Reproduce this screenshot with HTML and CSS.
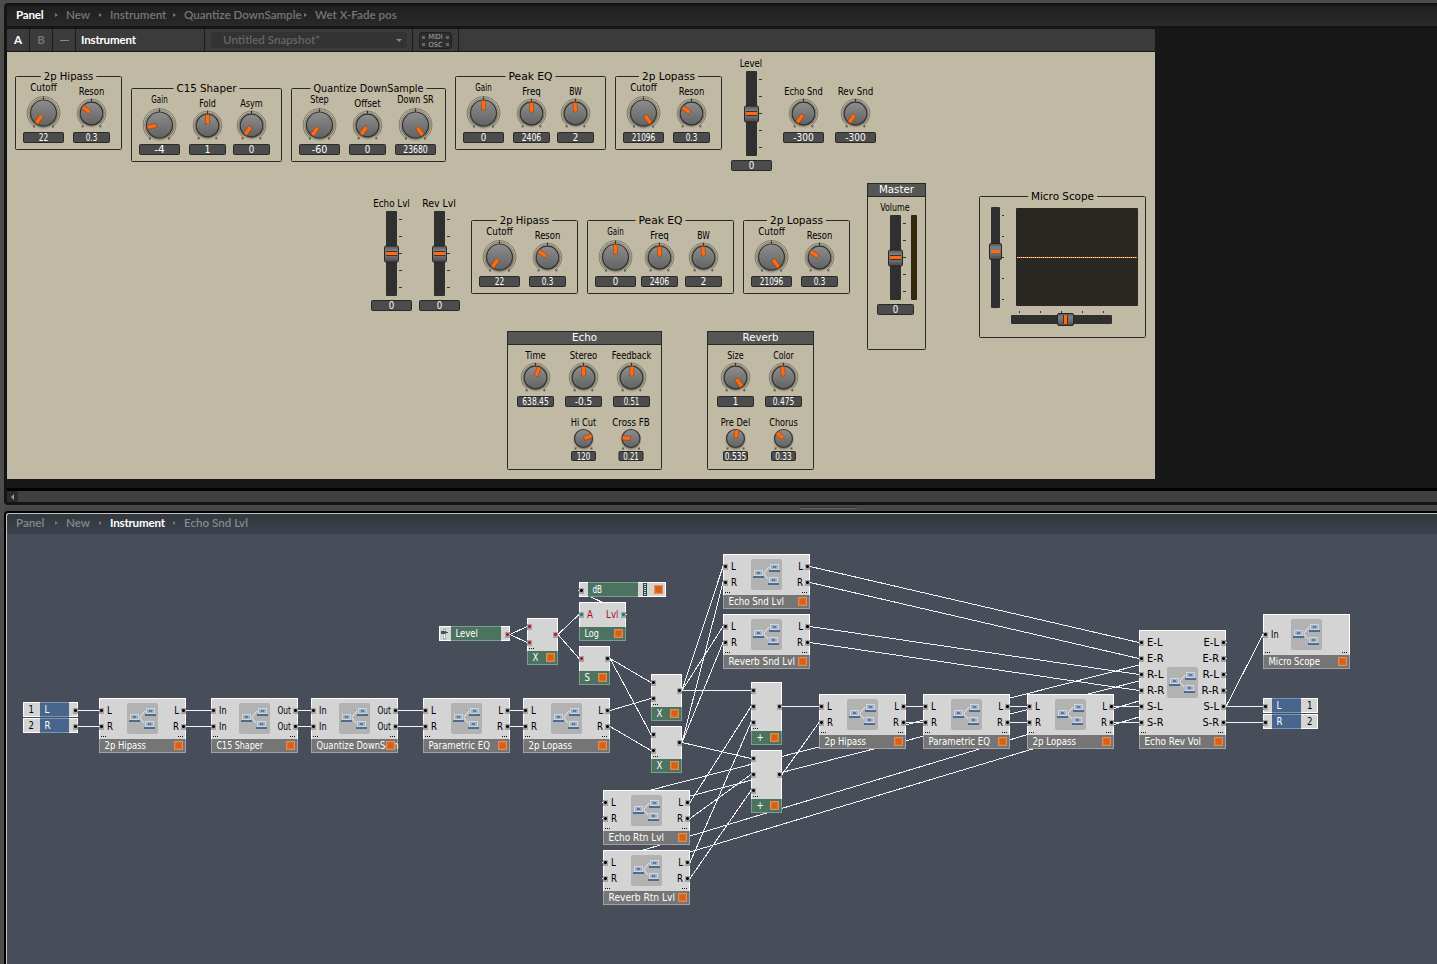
FILE: index.html
```html
<!DOCTYPE html>
<html lang="en">
<head>
<meta charset="utf-8">
<title>Instrument</title>
<link rel="stylesheet" href="styles.css">
</head>
<body>
<section class="window window-panel">
  <nav class="crumbs">
    <span class="crumb active">Panel</span><span class="crumb">New</span><span class="crumb">Instrument</span><span class="crumb">Quantize DownSample</span><span class="crumb">Wet X-Fade pos</span>
  </nav>
  <div class="panel-area">
    <div class="instrument">
      <header class="toolbar">
        <div class="cell slot on">A</div>
        <div class="cell slot">B</div>
        <div class="cell slot"><i class="dash"></i></div>
        <div class="cell name">Instrument</div>
        <div class="cell snap"><div class="snap-field"><span>Untitled Snapshot*</span><i class="caret"></i></div></div>
        <div class="cell midi"><svg id="midi" width="33" height="17"></svg></div>
      </header>
      <svg id="panel" width="1148" height="427" viewBox="7 52 1148 427"></svg>
    </div>
  </div>
  <div class="scrollbar"><div class="scroll-arrow"></div></div>
</section>
<div class="splitter"><i></i></div>
<section class="window window-structure">
  <nav class="crumbs">
    <span class="crumb">Panel</span><span class="crumb">New</span><span class="crumb active">Instrument</span><span class="crumb">Echo Snd Lvl</span>
  </nav>
  <svg id="structure" width="1430" height="430" viewBox="7 534 1430 430"></svg>
</section>
<script src="app.js"></script>
</body>
</html>
```
FILE: styles.css
```css
* { box-sizing: border-box; }
body { margin: 0; width: 1437px; height: 964px; overflow: hidden; background: #4d4d4d; padding: 3px 0 0 4px; display: flex; flex-direction: column; font-family: Lato, "Noto Sans", sans-serif; }
.window { border: 3px solid #141414; border-right: 0; flex: none; }
.window-panel { height: 502px; border-radius: 4px 0 0 4px; background: #181818; }
.crumbs { display: grid; grid-template-columns: 50px 44px 74px 131px 110px; align-items: center; padding: 0 0 2px 9px; font-size: 11.6px; font-weight: 600; letter-spacing: 0; color: #767676; white-space: nowrap; }
.crumb { display: flex; align-items: center; justify-content: space-between; padding-right: 8px; line-height: 18px; }
.crumb:not(:last-child)::after { content: ""; border: 2.5px solid transparent; border-left: 3px solid #777; border-right: 0; }
.crumb.active { color: #fff; font-weight: 700; letter-spacing: -0.2px; }
.window-panel .crumbs { height: 20px; background: linear-gradient(#202020, #292929); }
.panel-area { border-top: 3px solid #141414; height: 462px; background: #181818; }
.instrument { width: 1148px; }
.toolbar { height: 23px; display: flex; background: #3b3b3b; border-bottom: 1px solid #181818; font-size: 11.6px; letter-spacing: -0.2px; font-weight: 700; line-height: 20px; color: #fff; }
.cell { border-right: 1px solid #1c1c1c; display: flex; align-items: center; }
.slot { width: 23px; justify-content: center; color: #757575; }
.slot.on { color: #fff; }
.dash { width: 9px; height: 1px; background: #8a8a8a; }
.name { width: 129px; padding-left: 5px; }
.snap { width: 208px; padding-left: 6px; }
.snap-field { width: 196px; height: 16px; display: flex; align-items: center; justify-content: space-between; background: #333; border-radius: 3px; padding: 0 5px 0 12px; color: #666; font-weight: 600; letter-spacing: 0; }
.caret { border: 3px solid transparent; border-top-color: #888; border-bottom: 0; }
.midi { width: 46px; justify-content: center; }
svg { display: block; }
.scrollbar { border-top: 3px solid #000; height: 14px; background: #404040; }
.scroll-arrow { width: 11px; height: 11px; background: #2b2b2b; display: flex; align-items: center; justify-content: center; }
.scroll-arrow::after { content: ""; border: 3px solid transparent; border-right-color: #999; border-left: 0; }
.splitter { height: 6px; display: flex; justify-content: center; align-items: center; background: #484848; flex: none; padding: 0 0 0 216px; }
.splitter i { width: 57px; height: 2px; background: #303030; border-bottom: 1px solid #666; }
.window-structure { height: 453px; border: 0; border-left: 2px solid #000; border-top: 2px solid #000; border-radius: 4px 0 0 0; background: #474e5a; }
.window-structure .crumbs { height: 21px; background: linear-gradient(#32383f, #3b424c); border-top: 1px solid #c4c4c4; border-left: 1px solid #c4c4c4; color: #858a92; border-radius: 3px 0 0 0; }
.window-structure .crumb.active { color: #fff; }
#structure { margin-left: 1px; box-shadow: -1px 0 #c4c4c4; }
#panel { background: #c0b9a3; }

.label { font-family: "DejaVu Sans Condensed", "DejaVu Sans", sans-serif; font-size: 9.6px; fill: #000; }
.title { font-family: "DejaVu Sans", sans-serif; font-size: 9.6px; fill: #000; }
.light { fill: #fff; }
.red { fill: #a8121c; }
.tiny { font-family: "DejaVu Sans", sans-serif; font-size: 7px; fill: #aaa; letter-spacing: 0; font-weight: 400; }
.frame { fill: none; stroke: #292929; }
.header { fill: #565654; stroke: #292929; }
.readout { fill: #4c4c4c; stroke: #292929; }
.track { fill: #303030; }
.tick { stroke: #333; }
.ring { fill: none; stroke: #7e796c; }
.needle { fill: #ff6a13; stroke: #80400f; stroke-width: .5; }
.wire { stroke: #f4f4f4; shape-rendering: crispEdges; }
.node { fill: #d4d4d4; shape-rendering: crispEdges; }
.edge { fill: none; shape-rendering: crispEdges; }
```
FILE: app.js
```javascript
const NARROW = { t: 4, f: 4, r: 4, i: 2, l: 2, '.': 2, I: 3, ' ': 4, '1': 4 };
const WIDE = { m: 8, w: 7, W: 8, M: 7, R: 6, v: 6, T: 6, H: 6, Q: 6, '-': 6 };
const textWidth = s => [...s].reduce((n, c) => n + (NARROW[c] || WIDE[c] || 5), 0) - 0.5;

function text(x, y, s, opts = {}) {
  const { cls = 'label', anchor = 'start', w = textWidth(s) } = opts;
  const fit = s.length > 1 ? ` textLength="${w}" lengthAdjust="spacingAndGlyphs"` : '';
  return `<text class="${cls}" x="${x}" y="${y}" text-anchor="${anchor}"${fit}>${s}</text>`;
}
const rect = (x, y, w, h, attrs) => `<rect x="${x}" y="${y}" width="${w}" height="${h}" ${attrs}/>`;
const line = (x1, y1, x2, y2, cls) => `<line x1="${x1}" y1="${y1}" x2="${x2}" y2="${y2}" class="${cls}"/>`;

/* ---------- instrument panel ---------- */
const SIZES = {
  L: { r: 13, cy: -19, label: -41, w: 41, h: 11, rings: [14.7, 16.4], n0: 3, n1: 12.5 },
  M: { r: 11.3, cy: -18.5, label: -37, w: 37, h: 11, rings: [12.8, 14.3], n0: 1.5, n1: 11 },
  S: { r: 9, cy: -12.5, label: -25, w: 25, h: 10, rings: [], n0: 0.5, n1: 8.8 }
};
function readout(cx, y, w, h, value) {
  return rect(cx - w / 2 + 0.5, y + 0.5, w - 1, h - 1, 'rx="1" class="readout"') +
    text(cx, y + (h > 10 ? 9 : 8.5), value, { cls: 'label light', anchor: 'middle' });
}
function arc(cx, cy, r) {
  const a = 0.66, dx = r * Math.sin(a), dy = r * Math.cos(a);
  return `<path class="ring" d="M${cx - dx} ${cy + dy}A${r} ${r} 0 1 1 ${cx + dx} ${cy + dy}"/>`;
}
function knob(size, cx, base, angle, label, value, boxWidth) {
  const k = SIZES[size], cy = base + k.cy, d = size === 'L' ? 9.5 : size === 'M' ? 8.8 : 8;
  const dy = size === 'S' ? 9 : d + 3;
  return k.rings.map(r => arc(cx, cy, r)).join('') +
    (size === 'S' ? '' : line(cx, cy - k.r - 3.5, cx, cy - k.r, 'tick')) +
    rect(cx - d - 1, cy + dy, 2, 2, 'fill="#5c594f"') + rect(cx + d - 1, cy + dy, 2, 2, 'fill="#5c594f"') +
    `<circle cx="${cx}" cy="${cy + 1.5}" r="${k.r}" fill="#5d594e" filter="url(#soft)"/>` +
    `<circle cx="${cx}" cy="${cy}" r="${k.r}" fill="url(#metal)" stroke="#333" stroke-width="1.2"/>` +
    `<g transform="rotate(${angle} ${cx} ${cy})">` + rect(cx - 2, cy - k.n1, 4, k.n1 - k.n0, 'class="needle"') + '</g>' +
    text(cx, base + k.label, label, { anchor: 'middle' }) +
    readout(cx, base, boxWidth || k.w, k.h, value);
}
function frame(x, y, w, h, title, tw) {
  const m = x + w / 2;
  return rect(x + 0.5, y + 0.5, w - 1, h - 1, 'rx="1" class="frame"') +
    rect(m - tw / 2 - 3, y, tw + 6, 1, 'fill="#c0b9a3"') +
    text(m, y + 3.5, title, { cls: 'title', anchor: 'middle', w: tw });
}
function box(x, y, w, h, title, tw) {
  return rect(x + 0.5, y + 0.5, w - 1, h - 1, 'rx="1" class="frame"') +
    rect(x + 0.5, y + 0.5, w - 1, 13, 'class="header"') +
    text(x + w / 2, y + 10, title, { cls: 'title light', anchor: 'middle', w: tw });
}
function fader(x, y) {
  let s = rect(x - 5.5, y, 11, 85, 'rx="1" class="track"');
  for (let i = 0; i < 5; i++) s += line(x + 7.5, y + 8.5 + 17 * i, x + 10.5, y + 8.5 + 17 * i, 'tick');
  return s + rect(x - 7, y + 35, 14, 16, 'rx="1.5" fill="url(#cap)" stroke="#262626"') + rect(x - 5.5, y + 40, 11, 5, 'fill="#41332a"') +
    rect(x - 5.5, y + 41, 11, 3, 'fill="#ff6a13"');
}
function scope() {
  let s = frame(979, 196, 167, 142, 'Micro Scope', 63);
  s += rect(991, 207, 9, 101, 'rx="1" class="track"') + rect(1011, 315, 101, 9, 'rx="1" class="track"');
  for (let i = 0; i < 5; i++) {
    s += line(1002, 215.5 + 21 * i, 1004, 215.5 + 21 * i, 'tick') + line(1019.5 + 21 * i, 311, 1019.5 + 21 * i, 313, 'tick');
  }
  s += rect(989.5, 243.5, 12, 16, 'rx="1.5" fill="url(#cap)" stroke="#262626"') + rect(991, 250, 9, 3, 'fill="#ff6a13"');
  s += rect(1057.5, 313.5, 16, 12, 'rx="1.5" fill="url(#cap)" stroke="#262626"') + rect(1063, 315, 5, 9, 'fill="#41332a"') + rect(1064, 315, 3, 9, 'fill="#ff6a13"');
  s += rect(1016, 208, 122, 98, 'rx="1" fill="#282722"') + rect(1017, 257, 120, 1, 'fill="#ff6a13"');
  for (let x = 1017; x < 1137; x += 2) s += rect(x, 257, 1, 1, 'fill="#eee8d8"');
  return s;
}
document.getElementById('panel').innerHTML = `<defs>
  <linearGradient id="metal" x1="0" y1="0" x2="0" y2="1"><stop offset="0" stop-color="#8e8e8e"/><stop offset="1" stop-color="#626262"/></linearGradient>
  <linearGradient id="cap" x1="0" y1="0" x2="0" y2="1"><stop offset="0" stop-color="#555"/><stop offset=".25" stop-color="#7e7e7e"/><stop offset=".7" stop-color="#6b6b6b"/><stop offset="1" stop-color="#444"/></linearGradient>
  <filter id="soft" x="-20%" y="-20%" width="140%" height="140%"><feGaussianBlur stdDeviation="1"/></filter></defs>` + [
  frame(15, 76, 107, 74, '2p Hipass', 49.5),
  knob('L', 43.5, 132, 215, 'Cutoff', '22'), knob('M', 91.5, 132, -53, 'Reson', '0.3'),
  frame(131, 88, 151, 74, 'C15 Shaper', 60),
  knob('L', 159.5, 144, -100, 'Gain', '-4'), knob('M', 207.5, 144, 0, 'Fold', '1'), knob('M', 251.5, 144, 215, 'Asym', '0'),
  frame(291, 88, 155, 74, 'Quantize DownSample', 110),
  knob('L', 319.5, 144, 215, 'Step', '-60'), knob('M', 367.5, 144, 215, 'Offset', '0'), knob('L', 415.5, 144, 145, 'Down SR', '23680'),
  frame(455, 76, 151, 74, 'Peak EQ', 44),
  knob('L', 483.5, 132, 0, 'Gain', '0'), knob('M', 531.5, 132, 0, 'Freq', '2406'), knob('M', 575.5, 132, -3, 'BW', '2'),
  frame(615, 76, 107, 74, '2p Lopass', 53),
  knob('L', 643.5, 132, 145, 'Cutoff', '21096'), knob('M', 691.5, 132, -56, 'Reson', '0.3'),
  text(751, 67, 'Level', { anchor: 'middle' }), fader(751.5, 71), readout(751.5, 160, 41, 11, '0'),
  knob('M', 803.5, 132, 215, 'Echo Snd', '-300', 41), knob('M', 855.5, 132, 215, 'Rev Snd', '-300', 41),
  text(391.5, 207, 'Echo Lvl', { anchor: 'middle' }), fader(391.5, 211), readout(391.5, 300, 41, 11, '0'),
  text(439, 207, 'Rev Lvl', { anchor: 'middle' }), fader(439.5, 211), readout(439.5, 300, 41, 11, '0'),
  frame(471, 220, 107, 74, '2p Hipass', 49.5),
  knob('L', 499.5, 276, 215, 'Cutoff', '22'), knob('M', 547.5, 276, -53, 'Reson', '0.3'),
  frame(587, 220, 147, 74, 'Peak EQ', 44),
  knob('L', 615.5, 276, 0, 'Gain', '0'), knob('M', 659.5, 276, 0, 'Freq', '2406'), knob('M', 703.5, 276, -3, 'BW', '2'),
  frame(743, 220, 107, 74, '2p Lopass', 53),
  knob('L', 771.5, 276, 145, 'Cutoff', '21096'), knob('M', 819.5, 276, -56, 'Reson', '0.3'),
  box(867, 183, 59, 167, 'Master', 35),
  text(895, 211, 'Volume', { anchor: 'middle' }), fader(895.5, 215),
  rect(911, 215, 6, 85, 'rx="1" fill="#292621"'), rect(912, 217, 4, 81, 'fill="#342a08"'), readout(895.5, 304, 37, 11, '0'),
  scope(),
  box(507, 331, 155, 139, 'Echo', 25),
  knob('M', 535.5, 396, 20, 'Time', '638.45'), knob('M', 583.5, 396, 0, 'Stereo', '-0.5'), knob('M', 631.5, 396, 3, 'Feedback', '0.51'),
  knob('S', 583.5, 451, 73, 'Hi Cut', '120'), knob('S', 631, 451, -85, 'Cross FB', '0.21'),
  box(707, 331, 107, 139, 'Reverb', 36),
  knob('M', 735.5, 396, 145, 'Size', '1'), knob('M', 783.5, 396, -5, 'Color', '0.475'),
  knob('S', 735.5, 451, 10, 'Pre Del', '0.535'), knob('S', 783.5, 451, -48, 'Chorus', '0.33')
].join('');

document.getElementById('midi').innerHTML = rect(0.5, 0.5, 32, 16, 'rx="2.5" fill="#2d2d2d" stroke="#222"') +
  text(16.5, 7, 'MIDI', { cls: 'tiny', anchor: 'middle', w: 14 }) + text(16.5, 14.5, 'OSC', { cls: 'tiny', anchor: 'middle', w: 14 }) +
  [[3, 4], [27, 4], [3, 11], [27, 11]].map(([x, y]) => rect(x, y, 3, 3, 'fill="#666"')).join('');

/* ---------- structure ---------- */
const GRAY = ['#757575', '#a2a2a2'], GREEN = ['#4c7360', '#79a08f'];
function port(x, y, color = '#000') {
  return rect(x - 2, y - 2, 5, 6, 'fill="#a3a3a3" shape-rendering="crispEdges"') +
    rect(x - 1, y, 3, 1, `fill="${color}"`) + rect(x, y - 1, 1, 3, `fill="${color}"`) + rect(x - 1, y - 1, 3, 3, `fill="${color}" opacity=".55"`);
}
const led = (x, y) => rect(x + 0.5, y + 0.5, 8, 8, 'fill="#d46115" stroke="#e88a50" shape-rendering="crispEdges"') + rect(x + 1.5, y + 1.5, 6, 6, 'fill="none" stroke="#df7732" stroke-width=".6"');
function body(x, y, w, h, strip, [fill, border]) {
  return rect(x, y, w, h, 'class="node"') + rect(x, y + strip, w, h - strip, `fill="${fill}"`) +
    `<path class="edge" stroke="#fff" d="M${x + 0.5} ${y + strip}V${y + 0.5}H${x + w - 0.5}V${y + strip}"/>` +
    `<path class="edge" stroke="${border}" d="M${x + 0.5} ${y + strip}V${y + h - 0.5}H${x + w - 0.5}V${y + strip}"/>`;
}
const dots = (x, y) => [0, 2, 4].map(i => rect(x + i, y, 1, 1, 'fill="#111"')).join('');
function macroIcon(x, y) {
  const unit = (ux, uy) => rect(ux + 1, uy, 9, 7, 'fill="#ccd7e3"') + rect(ux + 2, uy + 1, 7, 4, 'fill="#9fb0c5"') + rect(ux + 4, uy + 2, 3, 2, 'fill="#60799f"') + rect(ux, uy + 6, 11, 2, 'fill="#506b91"');
  return rect(x, y, 31, 31, 'rx="2" fill="#b2b2b2"') +
    `<path d="M13 14L18 8M13 15L17 20" transform="translate(${x} ${y})" stroke="#eee"/>` +
    unit(x + 2, y + 11) + unit(x + 18, y + 5) + unit(x + 17, y + 18);
}
function macro(x, y, name, ins, outs = ins, opts = {}) {
  const { h = 55, iconY = 5, portY = 12, nameWidth } = opts;
  let s = body(x, y, 87, h, h - 14, GRAY) + macroIcon(x + 28, y + iconY);
  ins.forEach((p, i) => { s += port(x + 2, y + portY + 16 * i) + text(x + 8, y + portY + 4 + 16 * i, p); });
  outs.forEach((p, i) => { s += port(x + 84, y + portY + 16 * i) + text(x + 80, y + portY + 4 + 16 * i, p, { anchor: 'end' }); });
  return s + dots(x + 2, y + h - 17) + dots(x + 79, y + h - 17) +
    text(x + 5.5, y + h - 4.5, name, { cls: 'label light', w: nameWidth }) + led(x + 75, y + h - 12);
}
function core(x, y, w, h, name, ins, outY, color, outColor = color, more = true) {
  return body(x, y, w, h, h - 14, GREEN) + ins.map(p => port(x + 2, y + p, color)).join('') + port(x + w - 3, y + outY, outColor) +
    (more ? dots(x + 2, y + h - 17) : '') + text(x + 5.5, y + h - 4.5, name, { cls: 'label light' }) + led(x + w - 12, y + h - 12);
}
function strip(x, y, w, a, b, palette, name) {
  return rect(x, y, w, 15, 'class="node"') + rect(x + a, y, b - a, 15, `fill="${palette[0]}"`) +
    `<path class="edge" stroke="#fff" d="M${x + 0.5} ${y + 15}V${y + 0.5}H${x + w - 0.5}V${y + 14.5}H${x}"/>` +
    rect(x + a, y, b - a, 1, `fill="${palette[1]}"`) + rect(x + a, y + 14, b - a, 1, `fill="${palette[1]}"`) +
    text(x + a + 4.5, y + 11, name, { cls: 'label light' });
}
const RED = '#b5121c', TEAL = '#087f76', BLUE = ['#47658d', '#7a95b7'], LR = ['L', 'R'];
const ERV = ['E-L', 'E-R', 'R-L', 'R-R', 'S-L', 'S-R'];
const wires = [
  [78, 710, 99, 710], [78, 726, 99, 726], [186, 710, 211, 710], [186, 726, 211, 726], [298, 710, 311, 710], [298, 726, 311, 726],
  [398, 710, 423, 710], [398, 726, 423, 726], [510, 710, 523, 710], [510, 726, 523, 726],
  [510, 634, 527, 626], [510, 634, 527, 642], [558, 634, 579, 614], [558, 634, 579, 658], [627, 614, 578, 590],
  [610, 658, 651, 682], [610, 658, 651, 734], [610, 710, 651, 698], [610, 726, 651, 750],
  [682, 690, 751, 690], [682, 690, 723, 566], [682, 690, 723, 626], [682, 742, 723, 582], [682, 742, 723, 642], [682, 742, 751, 758],
  [690, 802, 751, 706], [690, 818, 751, 774], [690, 862, 751, 722], [690, 878, 751, 790],
  [782, 706, 819, 706], [782, 774, 819, 722], [906, 706, 923, 706], [906, 722, 923, 722], [1010, 706, 1027, 706], [1010, 722, 1027, 722],
  [1114, 706, 1139, 706], [1114, 722, 1139, 722],
  [810, 566, 1139, 642], [810, 582, 1139, 658], [810, 626, 1139, 674], [810, 642, 1139, 690],
  [1227, 642, 602, 802], [1227, 658, 602, 818], [1227, 674, 602, 862], [1227, 690, 602, 878],
  [1226, 706, 1263, 634], [1226, 706, 1263, 706], [1226, 722, 1263, 722]
];
document.getElementById('structure').innerHTML = wires.map(([a, b, c, d]) => line(a, b + 0.5, c, d + 0.5, 'wire')).join('') + [
  strip(23, 702, 55, 17, 46, BLUE, 'L'), text(28.5, 713, '1'), port(75, 710),
  strip(23, 718, 55, 17, 46, BLUE, 'R'), text(28.5, 729, '2'), port(75, 726),
  macro(99, 698, '2p Hipass', LR), macro(211, 698, 'C15 Shaper', ['In', 'In'], ['Out', 'Out']),
  macro(311, 698, 'Quantize DownSam', ['In', 'In'], ['Out', 'Out'], { nameWidth: 82 }),
  macro(423, 698, 'Parametric EQ', LR), macro(523, 698, '2p Lopass', LR),
  macro(723, 554, 'Echo Snd Lvl', LR), macro(723, 614, 'Reverb Snd Lvl', LR),
  macro(603, 790, 'Echo Rtn Lvl', LR), macro(603, 850, 'Reverb Rtn Lvl', LR),
  macro(819, 694, '2p Hipass', LR), macro(923, 694, 'Parametric EQ', LR), macro(1027, 694, '2p Lopass', LR),
  macro(1139, 630, 'Echo Rev Vol', ERV, ERV, { h: 119, iconY: 37 }),
  macro(1263, 614, 'Micro Scope', ['In'], [], { portY: 20 }),
  strip(439, 626, 71, 12, 62, GREEN, 'Level'), port(507, 634, RED), rect(443.5, 629, 2, 10, 'fill="#fff" stroke="#a4b4b6"'), rect(441, 631, 5, 3, 'fill="#415451"'), rect(446, 632, 2, 1, 'fill="#415451"'),
  core(527, 618, 31, 47, 'X', [8, 24], 16, RED),
  strip(579, 582, 87, 9, 59, GREEN, 'dB'), port(581, 590), led(654, 585),
  rect(643, 583, 4, 13, 'fill="#31484b"'), [1, 3, 5, 7, 9, 11].map(i => rect(644, 583 + i, 2, 1, 'fill="#cdd9da"')).join(''),
  core(579, 602, 47, 39, 'Log', [12], 12, TEAL, TEAL, false), text(587, 618, 'A', { cls: 'label red' }), text(618.5, 618, 'Lvl', { cls: 'label red', anchor: 'end' }),
  core(579, 646, 31, 39, 'S', [12], 12, RED, '#000', false),
  core(651, 674, 31, 47, 'X', [8, 24], 16), core(651, 726, 31, 47, 'X', [8, 24], 16),
  core(751, 682, 31, 63, '+', [8, 24, 40], 24), core(751, 750, 31, 63, '+', [8, 24, 40], 24),
  strip(1263, 698, 55, 9, 38, BLUE, 'L'), text(1307, 709, '1'), port(1265, 706),
  strip(1263, 714, 55, 9, 38, BLUE, 'R'), text(1307, 725, '2'), port(1265, 722)
].join('');
```
